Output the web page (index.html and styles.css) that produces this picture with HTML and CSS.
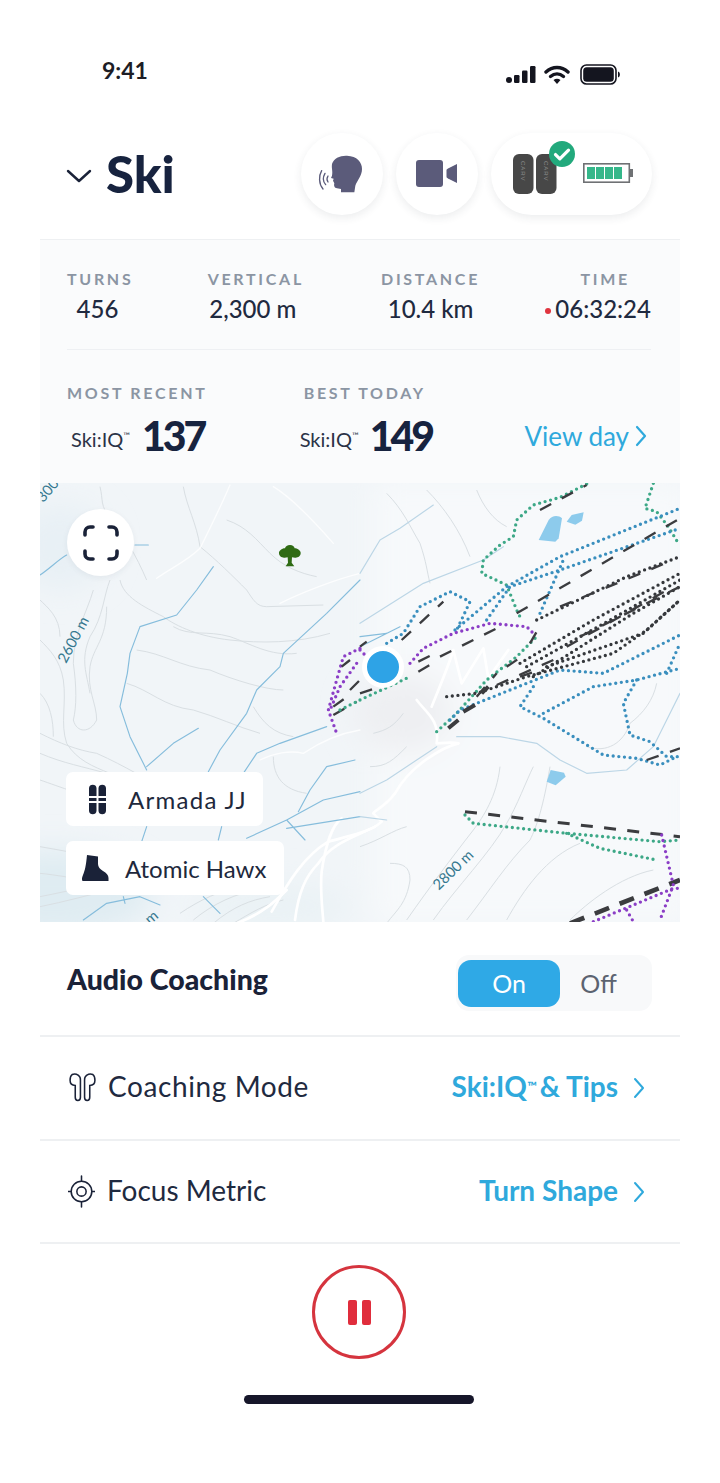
FILE: index.html
```html
<!DOCTYPE html>
<html lang="en">
<head>
<meta charset="utf-8">
<title>Ski</title>
<link rel="stylesheet" href="styles.css">
</head>
<body>
<div class="app">
  <div class="status">
    <span class="clock">9:41</span>
    <div class="status-icons">
      <svg class="sig" viewBox="0 0 30 17"><circle cx="3" cy="14" r="3"/><rect x="8" y="9" width="5.500" height="8" rx="1.200"/><rect x="16" y="4.500" width="5.500" height="12.500" rx="1.200"/><rect x="24" y="0" width="5.500" height="17" rx="1.200"/></svg>
      <svg class="wifi" viewBox="0 0 26 19"><path d="M2 7C8.500 1 17.500 1 24 7" fill="none" stroke="#14151f" stroke-width="3.400" stroke-linecap="round"/><path d="M6.500 11.500c4-3.300 9-3.300 13 0" fill="none" stroke="#14151f" stroke-width="3.400" stroke-linecap="round"/><path d="M9.500 15c2.300-1.700 4.700-1.700 7 0l-3.500 4z" fill="#14151f"/></svg>
      <svg class="batt" viewBox="0 0 41 21"><rect x="1" y="1" width="35" height="19" rx="5.500" fill="none" stroke="#14151f" stroke-width="1.600"/><rect x="3.200" y="3.200" width="30.600" height="14.600" rx="3.500" fill="#14151f"/><path d="M38 7.500c2.500.5 2.500 5.500 0 6z" fill="#14151f"/></svg>
    </div>
  </div>

  <header class="head">
    <div class="title-wrap">
      <svg class="caret" viewBox="0 0 26 14"><path d="M2 2l11 10L24 2" fill="none" stroke="#1a2238" stroke-width="2.400" stroke-linecap="round" stroke-linejoin="round"/></svg>
      <h1 class="title">Ski</h1>
    </div>
    <div class="actions">
      <div class="round-btn">
        <svg class="ico-head" viewBox="0 0 150 120"><path d="M45 30C50 12 70 4 90 5c30 1 45 20 45 40 0 20-15 35-20 50l-3 20H72v-10l-12-2c-8-1-10-8-8-15l-4-8 2-6-8-2 3-7c3-15-2-20 0-35z" fill="#5b5b7a"/><path d="M14 50C5 65 5 90 18 105M24 58c-7 12-7 24 2 34M33 66c-4 6-4 12 0 18" fill="none" stroke="#5b5b7a" stroke-width="4" stroke-linecap="round"/></svg>
      </div>
      <div class="round-btn">
        <svg class="ico-cam" viewBox="0 0 42 28"><rect x="0" y="0" width="27" height="27" rx="3" fill="#5b5b7a"/><path d="M41 4v19L32 18.500c-1-.5-1.500-1-1.500-2v-6c0-1 .5-1.500 1.500-2z" fill="#5b5b7a"/></svg>
      </div>
      <div class="pill-btn">
        <div class="sensors">
          <svg class="ico-sensor" viewBox="0 0 44 40"><rect x="0" y="0" width="20.500" height="40" rx="6" fill="#474747"/><rect x="23" y="0" width="20.500" height="40" rx="6" fill="#474747"/><text class="carv" transform="translate(8 7) rotate(90)">CARV</text><text class="carv" transform="translate(31 7) rotate(90)">CARV</text></svg>
          <span class="check"><svg viewBox="0 0 24 24"><path d="M6 12.500l4 4 8-8" fill="none" stroke="#fff" stroke-width="3" stroke-linecap="round" stroke-linejoin="round"/></svg></span>
        </div>
        <svg class="ico-batt" viewBox="0 0 50 20"><rect x=".8" y=".8" width="45.500" height="18.400" fill="#fff" stroke="#6f7174" stroke-width="1.600"/><rect x="47" y="6" width="3" height="8" fill="#6f7174"/><rect x="4" y="4" width="8" height="12" fill="#35b78a"/><rect x="13" y="4" width="8" height="12" fill="#35b78a"/><rect x="22" y="4" width="8" height="12" fill="#35b78a"/><rect x="31" y="4" width="8" height="12" fill="#35b78a"/></svg>
      </div>
    </div>
  </header>

  <section class="panel">
    <div class="stats">
      <div class="stat"><div class="label">TURNS</div><div class="value">456</div></div>
      <div class="stat"><div class="label">VERTICAL</div><div class="value">2,300 m</div></div>
      <div class="stat"><div class="label">DISTANCE</div><div class="value">10.4 km</div></div>
      <div class="stat stat-time"><div class="label">TIME</div><div class="value"><i class="rec"></i>06:32:24</div></div>
    </div>
    <div class="scores">
      <div class="score">
        <div class="label">MOST RECENT</div>
        <div class="score-line"><span class="iq">Ski:IQ<sup>™</sup></span><b class="num">137</b></div>
      </div>
      <div class="score score-best">
        <div class="label">BEST TODAY</div>
        <div class="score-line"><span class="iq">Ski:IQ<sup>™</sup></span><b class="num">149</b></div>
      </div>
      <a class="view-day">View day <svg class="chev" viewBox="0 0 12 22"><path d="M2 2l8 9-8 9" fill="none" stroke="currentColor" stroke-width="2.200" stroke-linecap="round" stroke-linejoin="round"/></svg></a>
    </div>
  </section>

  <section class="map">
    <svg class="map-art" viewBox="0 9 1920 1317" preserveAspectRatio="none">
      <defs>
        <filter id="soft" x="-30%" y="-30%" width="160%" height="160%"><feGaussianBlur stdDeviation="45"/></filter>
      </defs>
      <rect x="0" y="0" width="1920" height="1340" fill="#f1f5f8"/>
      <g filter="url(#soft)">
        <rect x="1000" y="0" width="960" height="1340" fill="#f7f9fb"/>
        <ellipse cx="40" cy="1240" rx="300" ry="130" fill="#dfecf2"/>
        <ellipse cx="700" cy="1280" rx="240" ry="70" fill="#eaf2f5"/>
        <ellipse cx="60" cy="200" rx="140" ry="130" fill="#e8f0f5"/>
        <ellipse cx="1090" cy="700" rx="150" ry="120" fill="#eeeff2"/>
      </g>

      <g class="contour">
        <path d="M180 20c10 40 0 60 30 90 40 50 80 120 110 190"/>
        <path d="M430 20c10 60 40 110 50 180 50 40 100 90 140 130 20 30 30 50 60 50l170-5"/>
        <path d="M560 120c60 20 90 60 130 100 40 40 90 60 140 70"/>
        <path d="M160 330c-20 70-60 130-60 220 10 70 10 130 0 170 10 40 50 40 70 0 0-50-30-90-20-160 10-60 50-80 50-180"/>
        <path d="M210 300c-20 50-20 110-60 170-30 70-10 110 0 170"/>
        <path d="M240 300c10 50 70 80 130 110 40 30 110 60 200 70 90 10 200 10 300-20"/>
        <path d="M400 440c50 30 100 10 170 30 60 20 120 60 200 50"/>
        <path d="M260 610c70 20 110 70 200 80 70 20 130 50 200 70"/>
        <path d="M290 510c80 10 130 50 220 60 70 30 170 60 220 60"/>
        <path d="M0 900c60 20 130 50 240 70"/>
        <path d="M0 480c30 30 60 60 70 120 10 70-10 130 10 190 30 50 80 70 130 90"/>
        <path d="M0 360c20 20 60 50 60 110"/>
        <path d="M0 640c30 30 40 80 40 130"/>
        <path d="M0 760c60 30 110 50 170 60 90 40 150 80 210 110"/>
        <path d="M0 820c70 30 130 40 200 60"/>
        <path d="M0 1100c120 20 240 50 340 40 90 0 170-10 260-10"/>
        <path d="M0 1180c100 10 200 40 330 20"/>
        <path d="M0 1280c150-30 290-80 460-100"/>
        <path d="M0 1250c100-20 200-40 300-90"/>
        <path d="M420 1300c60-40 120-70 190-80"/>
        <path d="M460 1320c60-50 130-80 190-90"/>
        <path d="M520 1330c60-50 110-70 170-80"/>
        <path d="M580 1330c50-30 100-60 150-70"/>
        <path d="M700 830c0 60 30 100 100 110"/>
        <path d="M640 680c30 50 60 80 120 90"/>
        <path d="M1040 40c50 50 70 100 100 150 20 60 20 80 30 120"/>
        <path d="M1160 30c50 50 100 120 130 200"/>
        <path d="M1310 30c20 50 50 90 90 110"/>
        <path d="M1640 800c60 20 110-10 130-70 40-30 70-70 80-120"/>
        <path d="M1100 1320c70-100 130-180 200-270 30-40 70-100 80-190"/>
        <path d="M1180 1320c70-100 170-200 220-290 30-50 60-130 80-170"/>
        <path d="M1280 1320c70-90 120-170 190-240 20-40 40-100 60-220"/>
        <path d="M1400 1320c50-90 120-190 220-230"/>
        <path d="M1050 1150c40 0 60 10 60 50-10 70-40 90-70 130"/>
        <path d="M960 1100c60-20 100-50 140-60"/>
        <path d="M1590 1320c50-50 150-130 250-150"/>
        <path d="M1100 800c-40 40-60 60-110 60"/>
        <path d="M1000 760c40-10 60-20 90-60"/>
      </g>

      <g class="road-soft">
        <path d="M350 295c40-30 90-50 130-90 20-40 60-120 90-190"/>
        <path d="M720 370c60-30 160-70 240-90"/>
        <path d="M700 20c50 30 110 90 180 170"/>
        <path d="M660 840c40-20 90-30 130-20 60-40 110-60 170-70"/>
      </g>
      <g class="road">
        <path d="M1175 680c20-50 50-120 65-170l25 100 65-105 15 90 60-85"/>
        <path d="M1130 660c30 40 70 60 60 130 30 0 40-5 65 0"/>
        <path d="M1255 790c-40 10-140 60-190 150-30 40-60 50-65 60l25 25c-30 30-90 40-160 60-70 40-120 120-170 210"/>
        <path d="M905 1015c-30 20-50 90-60 160-5 50 0 90 5 150"/>
        <path d="M1005 1040c-60 30-130 50-170 110-40 40-60 90-70 170"/>
        <path d="M740 1230c-30 30-70 70-150 100"/>
      </g>

      <g class="river">
        <path d="M0 285c30-20 60-50 80-60M285 195h40"/>
        <path d="M520 260l-50 70-60 75-110 35-30 80-8 60-22 100 30 90 50 100M320 860l80-70 75-45"/>
        <path d="M960 300l-100 100-130 120-10 40-70 70-30 70-80 110-35 65"/>
        <path d="M860 740l-140 50-70 30-40 60M945 840l-85 20-50 70-35 65"/>
        <path d="M960 935l-110 25-110 60-120 55M740 1020l55 60M960 1010l-220 35M545 1040l-10 40M320 1040l-15 45"/>
        <path d="M130 1320l70-50 100-20 60 25M490 1250l50 50M250 1250l5 20"/>
        <path d="M960 500l120-60M960 470l80-10"/>
      </g>
      <g class="river river-faint" transform="translate(960 0)">
        <path d="M0 280l60-100 60-35 100-70"/>
        <path d="M0 430l190-120 180-70 60-40"/>
        <path d="M290 770h130l110 20 70 50 80 40 120-10 80-70 80-160"/>
        <path d="M0 940l80-40 150-100M0 1010l80 10"/>
      </g>

      <g transform="translate(960 0)" fill="#8dcbec">
        <path d="M536 180l30-60c10-15 30-15 40-5l-10 60-10 10z"/>
        <path d="M620 125l15-20 36-8-5 25-20 12z"/>
        <path d="M560 905l12-35 40 8 5 12-30 26z"/>
      </g>

      <g transform="translate(960 0)">
        <g class="run teal">
          <path d="M880 10l-25 75 35 10 35 45 30 50"/>
          <path d="M680 12l-80 40-80 23-50 45-10 50-40 25-50 45-5 40 75 35 30 75 10 20"/>
          <path d="M315 1005l25 25 280 30 280 25 60-5M620 1060l100 45 170 35"/>
          <path d="M230 755l60-55 90-100 90-70 60-60"/>
          <path d="M0 660l150-70"/>
        </g>
        <g class="run blue">
          <path d="M80 490l50-30 50-80 90-45 60 30-40 85"/>
          <path d="M285 450l155-130 160-90 360-145"/>
          <path d="M380 420l70-100 150-50 360-125"/>
          <path d="M540 400l70-160"/>
          <path d="M270 720l30-30 200-80 100-40 130 10 230-115"/>
          <path d="M520 620l-40 60 70 35 180 110 100 10 70 20 50-25"/>
          <path d="M550 700l150-80 130-20 130-35"/>
          <path d="M830 600l-40 70 20 95 60 20 50 45h40"/>
          <path d="M920 580l40-90"/>
        </g>
        <g class="run ink">
          <path d="M530 420l270-130 160-60"/>
          <path d="M480 550l220-130 260-140"/>
          <path d="M500 560l250-140 210-120"/>
          <path d="M520 590l300-190 140-80"/>
          <path d="M560 560l290-100 110-100"/>
          <path d="M260 650l90-10 150-50 260-70 100-70 100-90"/>
        </g>
        <g class="lift">
          <path d="M470 400l490-285"/>
          <path d="M125 480l125-115"/>
          <path d="M0 500l20-15"/>
          <path d="M175 545l60-30"/>
          <path d="M175 575l60-35"/>
          <path d="M540 90l140-75"/>
          <path d="M0 640l140-45"/>
          <path d="M240 530l190-95"/>
          <path d="M510 490l20-35"/>
          <path d="M440 560l60-40"/>
          <path d="M350 650l60-70"/>
          <path d="M410 615l170-75"/>
          <path d="M480 590l60-20"/>
          <path d="M600 380l340-140"/>
          <path d="M620 500l320-180"/>
          <path d="M660 470l300-150"/>
          <path d="M860 840l100-35"/>
        </g>
        <path class="lift heavy" d="M265 745l30-25M310 695l35-20M365 640l20-20"/>
        <path class="lift long" d="M315 995l645 75"/>
        <path class="lift big" d="M630 1330l330-130"/>
        <g class="run purple">
          <path d="M150 550l40-45 90-45 110-30 110 10 25 25"/>
          <path d="M905 1065l35 150-40 105"/>
          <path d="M700 1325l240-100h20M800 1290l20 35"/>
          <path d="M0 510l20 20"/>
        </g>
      </g>
      <g class="run purple">
        <path d="M960 505l-50 25-20 70-25 90 25 70"/>
        <path d="M950 550l-50 70-30 70"/>
      </g>
      <g class="lift">
        <path d="M905 560l25-20M930 630l30-30M880 680l35-25M880 705l70-40"/>
      </g>
      <g class="run teal"><path d="M900 690l60-30"/></g>

      <text class="elev" transform="translate(78 552) rotate(-62)">2600 m</text>
      <text class="elev" transform="translate(1196 1232) rotate(-44)">2800 m</text>
      <text class="elev" transform="translate(10 70) rotate(-50)">300</text>
      <text class="elev" transform="translate(330 1335) rotate(-40)">m</text>

      <g fill="#2f6b14">
        <path d="M750 195c8 0 13 5 14 10 10 0 19 8 18 15 0 9-9 14-17 13l-9-1-1 16 8 11h-26l7-11-1-16-9 1c-8 1-17-4-17-13-1-7 8-15 18-15 1-5 7-10 15-10z"/>
      </g>
    </svg>

    <button class="fs-btn" aria-label="Fullscreen">
      <svg viewBox="0 0 36 36"><path d="M2 10V7a5 5 0 0 1 5-5h3M26 2h3a5 5 0 0 1 5 5v3M34 26v3a5 5 0 0 1-5 5h-3M10 34H7a5 5 0 0 1-5-5v-3" fill="none" stroke="#1a2238" stroke-width="3.600" stroke-linecap="round"/></svg>
    </button>

    <div class="location"></div>

    <div class="chips">
      <div class="chip chip-ski">
        <svg class="ico-ski" viewBox="0 0 17 31"><path d="M0 12V4a3.800 3.800 0 0 1 7.500 0v8zM9.500 12V4a3.800 3.800 0 0 1 7.500 0v8zM0 14h7.500v3H0zM9.500 14H17v3H9.500zM0 19h7.500v8a3.800 3.800 0 0 1-7.500 0zM9.500 19H17v8a3.800 3.800 0 0 1-7.500 0z" fill="#1a2238"/></svg>
        <span>Armada JJ</span>
      </div>
      <div class="chip chip-boot">
        <svg class="ico-boot" viewBox="0 0 27 26"><path d="M5 0l11 1.500V9c0 3 2 5 5 7 3.500 2 5.500 4 5.500 7v3H.500c-1-2-.5-3.500.5-6 2-5 3-9 4-20z" fill="#1a2238"/></svg>
        <span>Atomic Hawx</span>
      </div>
    </div>
  </section>

  <section class="rows">
    <div class="row row-audio">
      <strong class="row-strong">Audio Coaching</strong>
      <div class="toggle"><span class="toggle-on">On</span><span class="toggle-off">Off</span></div>
    </div>
    <div class="row">
      <div class="row-left row-left-wide">
        <svg class="ico-pods" viewBox="0 0 26 28"><path d="M3 1.500C5.500.5 9 1 10.500 4c.7 1.500.5 3 .5 4.500v15c0 2-1 3-2.500 3S6 25.500 6 23.500V12c-3 0-5-2-5-5 0-2.500.5-4.500 2-5.500zM23 1.500C20.500.5 17 1 15.500 4c-.7 1.500-.5 3-.5 4.500v15c0 2 1 3 2.500 3s2.500-1 2.500-3V12c3 0 5-2 5-5 0-2.500-.5-4.500-2-5.500z" fill="none" stroke="#1a2238" stroke-width="1.500"/></svg>
        <span>Coaching Mode</span>
      </div>
      <a class="row-link">Ski:IQ<sup>™</sup> &amp; Tips<svg class="chev chev-row" viewBox="0 0 12 22"><path d="M2 2l8 9-8 9" fill="none" stroke="currentColor" stroke-width="2" stroke-linecap="round" stroke-linejoin="round"/></svg></a>
    </div>
    <div class="row">
      <div class="row-left">
        <svg class="ico-target" viewBox="0 0 26 32"><circle cx="13" cy="16" r="10" fill="none" stroke="#1a2238" stroke-width="1.500"/><circle cx="13" cy="16" r="4.500" fill="none" stroke="#1a2238" stroke-width="1.500"/><path d="M13 1v5M13 26v5M0 16h3M23 16h3" stroke="#1a2238" stroke-width="1.500" stroke-linecap="round"/></svg>
        <span>Focus Metric</span>
      </div>
      <a class="row-link">Turn Shape<svg class="chev chev-row" viewBox="0 0 12 22"><path d="M2 2l8 9-8 9" fill="none" stroke="currentColor" stroke-width="2" stroke-linecap="round" stroke-linejoin="round"/></svg></a>
    </div>
  </section>

  <footer class="foot">
    <button class="pause" aria-label="Pause"><i></i><i></i></button>
    <div class="home-bar"></div>
  </footer>
</div>
</body>
</html>
```

FILE: styles.css
```css
* { box-sizing: border-box; }
html, body { margin: 0; padding: 0; background: #fff; }
body { font-family: Lato, "Noto Sans", Arial, sans-serif; color: #1a2238; }
.app { width: 720px; height: 1483px; display: flex; flex-direction: column; background: #fff; overflow: hidden; }

.status { height: 133px; padding: 55px 99px 0 102px; display: flex; justify-content: space-between; align-items: flex-start; }
.clock { font-size: 23px; line-height: 30px; font-weight: 700; color: #1d1d25; }
.status-icons { display: flex; align-items: center; gap: 8px; padding-top: 9px; }
.sig { width: 30px; height: 17px; fill: #14151f; }
.wifi { width: 26px; height: 19px; }
.batt { width: 41px; height: 21px; margin-left: 2px; }

.head { height: 107px; margin: 0 40px; padding: 0 28px 24px 26px; display: flex; justify-content: space-between; align-items: flex-start; border-bottom: 1px solid #eef0f2; }
.title-wrap { display: flex; align-items: center; gap: 14px; height: 82px; }
.caret { width: 26px; height: 14px; margin-top: 4px; }
.title { margin: 0; font-size: 51px; line-height: 82px; font-weight: 900; color: #17233f; }
.actions { display: flex; gap: 13px; }
.round-btn { width: 82px; height: 82px; border-radius: 50%; background: #fff; box-shadow: 0 3px 9px rgba(40, 50, 70, .09); display: flex; align-items: center; justify-content: center; }
.pill-btn { position: relative; width: 161px; height: 82px; border-radius: 41px; background: #fff; box-shadow: 0 3px 9px rgba(40, 50, 70, .09); display: flex; align-items: center; padding: 0 19px 0 22px; justify-content: space-between; }
.ico-head { width: 50px; height: 40px; }
.ico-cam { width: 42px; height: 28px; }
.sensors { position: relative; width: 44px; height: 40px; }
.ico-sensor { width: 44px; height: 40px; display: block; }
.carv { font-size: 6px; letter-spacing: 1px; fill: #8b8b8b; font-family: "Liberation Sans", sans-serif; }
.check { position: absolute; top: -13px; right: -18px; width: 26px; height: 26px; border-radius: 50%; background: #22a97c; display: flex; }
.check svg { width: 26px; height: 26px; }
.ico-batt { width: 50px; height: 20px; margin-top: -2px; }

.panel { margin: 0 40px; height: 243px; background: #fafbfc; padding: 29px 29px 0 27px; display: flex; flex-direction: column; }
.label { font-size: 16px; line-height: 20px; font-weight: 700; letter-spacing: 2.700px; color: #8b95a3; white-space: nowrap; }
.stats { display: flex; justify-content: space-between; height: 81px; border-bottom: 1px solid #eef0f3; }
.stat { text-align: center; }
.stat:nth-child(1) { width: 64px; }
.stat:nth-child(2) { margin-left: 10px; width: 100px; }
.stat:nth-child(3) { margin-left: 10px; width: 100px; }
.value { font-size: 24px; line-height: 30px; margin-top: 5px; color: #1f2a40; white-space: nowrap; font-weight: 500; }
.stat:nth-child(1) .value { margin-right: 3px; }
.stat:nth-child(2) .value { margin-right: 6px; }
.stat-time { text-align: right; }
.stat-time .label { padding-right: 21px; }
.rec { display: inline-block; width: 6px; height: 6px; border-radius: 50%; background: #e0343f; margin-right: 4px; vertical-align: 4px; }
.scores { display: flex; align-items: flex-start; padding-top: 33px; }
.score { width: 238px; }
.score-best { width: 222px; }
.score-line { display: flex; align-items: center; gap: 12px; height: 44px; margin-top: 11px; padding-left: 4px; }
.score-best .score-line { padding-left: 0; margin-left: -4px; gap: 11px; }
.iq { font-size: 20px; color: #2b3347; position: relative; top: 3px; }
.iq sup { font-size: 9px; line-height: 0; }
.num { font-size: 41px; line-height: 44px; font-weight: 900; color: #17233f; letter-spacing: -3px; }
.view-day { margin-top: 38px; margin-left: auto; margin-right: 4px; font-size: 26px; line-height: 30px; color: #2fa9dc; white-space: nowrap; display: flex; align-items: center; gap: 6px; }
.chev { width: 12px; height: 22px; }

.map { position: relative; margin: 0 40px; height: 439px; overflow: hidden; }
.map-art { display: block; width: 640px; height: 439px; }
.contour path { fill: none; stroke: #d9dfe3; stroke-width: 3; }
.road path { fill: none; stroke: #fff; stroke-width: 8; stroke-linecap: round; stroke-linejoin: round; }
.road-soft path { fill: none; stroke: #fff; stroke-width: 4; opacity: .8; stroke-linecap: round; }
.river path { fill: none; stroke: #86bddc; stroke-width: 3.500; stroke-linejoin: round; stroke-linecap: round; }
.river-faint path { stroke: #bcd6e6; }
.run path { fill: none; stroke-width: 10; stroke-linecap: round; stroke-dasharray: 0 17; stroke-linejoin: round; }
.teal path { stroke: #3da887; }
.blue path { stroke: #3a8fbe; }
.ink path { stroke: #35383c; }
.purple path { stroke: #8b3ec6; }
.lift path, path.lift { fill: none; stroke: #3b3c3f; stroke-width: 7; stroke-dasharray: 38 36; }
path.heavy { stroke-width: 12; stroke-dasharray: none; }
path.long { stroke-width: 9; stroke-dasharray: 36 34; }
path.big { stroke-width: 14; stroke-dasharray: 46 34; }
.elev { font-family: Lato, sans-serif; font-size: 44px; fill: #35788f; }

.fs-btn { position: absolute; left: 27px; top: 26px; width: 67px; height: 67px; border: 0; padding: 0; border-radius: 50%; background: #fff; box-shadow: 0 2px 6px rgba(40, 50, 70, .06); display: flex; align-items: center; justify-content: center; }
.fs-btn svg { width: 36px; height: 36px; }
.location { position: absolute; left: 322px; top: 163px; width: 42px; height: 42px; border-radius: 50%; background: #2ea3e6; border: 5px solid #fff; }
.chips { position: absolute; left: 26px; top: 289px; display: flex; flex-direction: column; align-items: flex-start; gap: 15px; }
.chip { height: 54px; background: #fff; border-radius: 7px; display: flex; align-items: center; font-size: 24px; color: #20283c; }
.chip-ski { width: 197px; padding-left: 23px; gap: 22px; letter-spacing: 1.300px; }
.chip-boot { width: 218px; padding-left: 16px; gap: 16px; }
.ico-ski { width: 17px; height: 31px; }
.ico-boot { width: 27px; height: 26px; }

.rows { margin: 0 40px; display: flex; flex-direction: column; }
.row { height: 103.500px; padding: 0 33px 3px 27px; border-bottom: 2px solid #eef0f2; display: flex; align-items: center; justify-content: space-between; }
.row-audio { height: 115px; padding-right: 28px; padding-top: 3px; }
.row-strong { font-size: 28.500px; font-weight: 900; color: #1a2238; }
.toggle { width: 196px; height: 56px; margin-top: 9px; border-radius: 13px; background: #f8f9fa; padding: 4px 0 4px 2px; display: flex; align-items: center; }
.toggle-on { width: 102px; height: 47px; border-radius: 13px; background: #2fa9e6; color: #fff; font-size: 25px; display: flex; align-items: center; justify-content: center; }
.toggle-off { flex: 1; text-align: center; font-size: 25px; color: #5c6370; padding-right: 15px; }
.row-left { display: flex; align-items: center; gap: 12px; font-size: 28px; color: #1f2a40; }
.row-left-wide { letter-spacing: .6px; }
.ico-pods { width: 27px; height: 29px; margin-top: 3px; margin-left: 2px; }
.ico-target { width: 27px; height: 33px; margin-top: 3px; margin-left: 1px; }
.row-link { display: flex; align-items: center; font-size: 28px; font-weight: 700; color: #2fa9dc; white-space: nowrap; }
.row-link sup { font-size: 13px; line-height: 0; margin-right: 3px; }
.chev-row { margin-left: 15px; margin-top: 4px; margin-right: 2px; }

.foot { flex: 1; display: flex; flex-direction: column; align-items: center; padding: 21px 2px 0 0; }
.pause { width: 94px; height: 94px; border-radius: 50%; border: 3px solid #d5343e; background: #fff; padding: 0; display: flex; align-items: center; justify-content: center; gap: 5px; }
.pause i { display: block; width: 9px; height: 25px; border-radius: 2px; background: #e02d3c; }
.home-bar { width: 230px; height: 9px; border-radius: 5px; background: #16162a; margin-top: 36px; }
```
